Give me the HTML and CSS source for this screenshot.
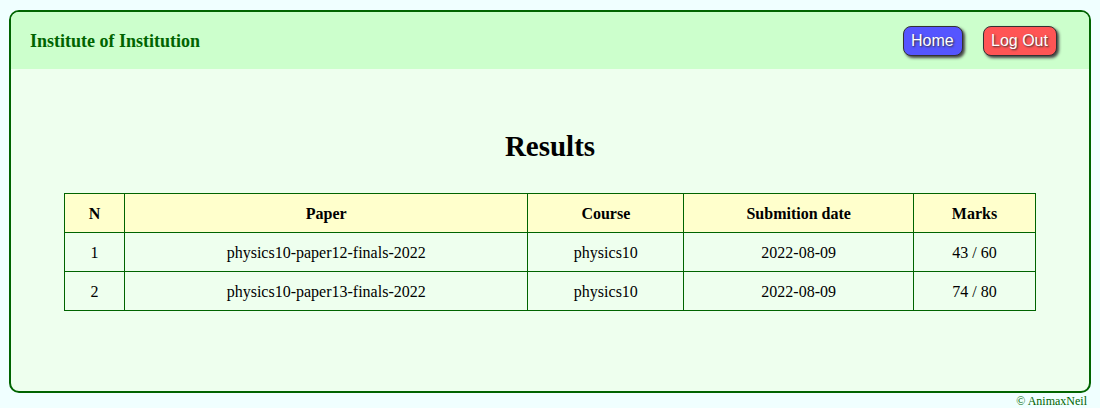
FILE: index.html
```html
<!DOCTYPE html>
<html>
<head>
<meta charset="utf-8">
<link rel="stylesheet" href="styles.css">
</head>
<body>
<div class="frame">
  <header class="topbar">
    <div class="brand">Institute of Institution</div>
    <nav class="nav">
      <a class="btn btn-home">Home</a>
      <a class="btn btn-out">Log Out</a>
    </nav>
  </header>
  <main class="content">
    <h2 class="title">Results</h2>
    <table class="results">
      <colgroup>
        <col class="c-n"><col class="c-paper"><col class="c-course"><col class="c-date"><col class="c-marks">
      </colgroup>
      <thead>
        <tr><th>N</th><th>Paper</th><th>Course</th><th>Submition date</th><th>Marks</th></tr>
      </thead>
      <tbody>
        <tr><td>1</td><td>physics10-paper12-finals-2022</td><td>physics10</td><td>2022-08-09</td><td>43 / 60</td></tr>
        <tr><td>2</td><td>physics10-paper13-finals-2022</td><td>physics10</td><td>2022-08-09</td><td>74 / 80</td></tr>
      </tbody>
    </table>
  </main>
</div>
<footer class="credit">© AnimaxNeil</footer>
</body>
</html>
```
FILE: styles.css
```css
html, body {
  margin: 0;
  padding: 0;
}
body {
  background: #f0ffff;
  font-family: "Liberation Serif", "Times New Roman", serif;
  padding: 10px 9px 0 9px;
}
.frame {
  border: 2px solid #006400;
  border-radius: 10px;
  overflow: hidden;
  background: #eeffee;
  height: 379px;
}
.topbar {
  background: #ccffcc;
  height: 57px;
  display: flex;
  align-items: center;
  justify-content: space-between;
  padding: 1px 32px 0 19px;
  box-sizing: border-box;
}
.brand {
  color: #006400;
  font-weight: bold;
  font-size: 18px;
}
.nav {
  display: flex;
  gap: 20px;
}
.btn {
  display: inline-block;
  box-sizing: border-box;
  height: 30px;
  line-height: 28px;
  padding: 0 7px;
  font-family: "Liberation Sans", Arial, sans-serif;
  font-size: 16px;
  color: #fff;
  text-shadow: 1px 1px 2px #333;
  border: 1px solid #333;
  border-radius: 8px;
  box-shadow: 2px 2px 3px #444;
  cursor: pointer;
}
.btn-home {
  background: #5555ff;
  width: 60px;
}
.btn-out {
  background: #ff5555;
  width: 74px;
}
.content {
  padding-top: 61px;
}
.title {
  margin: 0 0 31px 0;
  text-align: center;
  font-size: 29px;
  line-height: 32px;
  font-weight: bold;
}
.results {
  width: 972px;
  margin: 0 auto;
  border-collapse: collapse;
  font-size: 16px;
  text-align: center;
}
.results th, .results td {
  border: 1px solid #006400;
  height: 39px;
  box-sizing: border-box;
  padding: 1px 10px 0 10px;
}
.results th {
  background: #ffffcc;
}
.c-n { width: 60px; }
.c-paper { width: 404px; }
.c-course { width: 156px; }
.c-date { width: 230px; }
.c-marks { width: 122px; }
.credit {
  text-align: right;
  color: #006400;
  font-size: 12px;
  padding-right: 4px;
  line-height: 14px;
  padding-top: 1px;
}
```
